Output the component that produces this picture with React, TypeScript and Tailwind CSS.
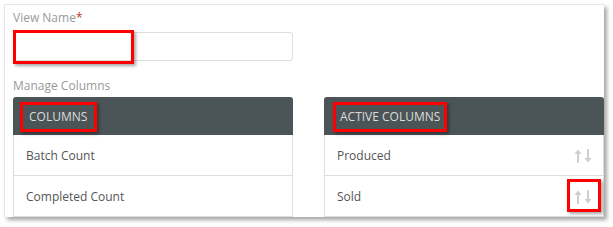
import React from "react";

const SortIcon = () => (
  <svg width="20" height="16" viewBox="0 0 20 16" className="block">
    <path d="M5 5 V15" stroke="#cfcfcf" strokeWidth="2" />
    <path d="M1.5 6 L5 1.5 L8.5 6 Z" fill="#cfcfcf" />
    <path d="M15 1 V11" stroke="#cfcfcf" strokeWidth="2" />
    <path d="M11.5 10 L15 14.5 L18.5 10 Z" fill="#cfcfcf" />
  </svg>
);

const RedBox = ({ className }: { className: string }) => (
  <div
    className={`absolute border-[3px] border-[#ff0000] shadow-[2px_2px_3px_rgba(0,0,0,0.35)] pointer-events-none ${className}`}
  />
);

export default function App() {
  return (
    <div
      className="w-[613px] h-[227px] bg-white overflow-hidden"
      style={{ fontFamily: '"Open Sans", "Liberation Sans", sans-serif' }}
    >
      <div className="ml-[4px] mt-[4px] w-[600px] h-[213px] bg-white border-l border-t border-[#e6e6e6] shadow-[3px_3px_4px_rgba(0,0,0,0.35)] overflow-hidden pl-[8px] pt-[4px]">
        <div className="text-[12px] leading-[18px] text-[#999999]">
          View Name<span className="text-[#c0392b]">*</span>
        </div>
        <div className="relative mt-[5px] w-[280px] h-[29px] border border-[#dddddd] rounded-[3px] bg-white">
          <RedBox className="-left-[1px] -top-[3px] w-[121px] h-[34px]" />
        </div>
        <div className="mt-[16px] text-[12px] leading-[18px] text-[#999999]">Manage Columns</div>
        <div className="mt-[2px] flex gap-[31px]">
          <div className="w-[280px] shrink-0">
            <div className="relative h-[38px] bg-[#4b5457] rounded-t-[3px] flex items-center pl-[16px] pt-[1px] text-[12px] text-[#dcdcdc]">
              COLUMNS
              <RedBox className="left-[7px] top-[5px] w-[77px] h-[30px]" />
            </div>
            <div className="border-x border-[#dddddd]">
              <div className="h-[41px] border-b border-[#dddddd] flex items-center pl-[12px] pt-[2px] text-[12px] text-[#555555]">
                Batch Count
              </div>
              <div className="h-[41px] border-b border-[#dddddd] flex items-center pl-[12px] pt-[2px] text-[12px] text-[#555555]">
                Completed Count
              </div>
            </div>
          </div>
          <div className="w-[280px] shrink-0">
            <div className="relative h-[38px] bg-[#4b5457] rounded-t-[3px] flex items-center pl-[16px] pt-[1px] text-[12px] text-[#dcdcdc]">
              ACTIVE COLUMNS
              <RedBox className="left-[9px] top-[5px] w-[114px] h-[30px]" />
            </div>
            <div className="border-x border-[#dddddd]">
              <div className="h-[41px] border-b border-[#dddddd] flex items-center justify-between pl-[12px] pr-[10px] pt-[2px] text-[12px] text-[#555555]">
                <span>Produced</span>
                <SortIcon />
              </div>
              <div className="relative h-[41px] border-b border-[#dddddd] flex items-center justify-between pl-[12px] pr-[10px] pt-[2px] text-[12px] text-[#555555]">
                <span>Sold</span>
                <SortIcon />
                <RedBox className="left-[242px] top-[3px] w-[34px] h-[33px]" />
              </div>
            </div>
          </div>
        </div>
      </div>
    </div>
  );
}
